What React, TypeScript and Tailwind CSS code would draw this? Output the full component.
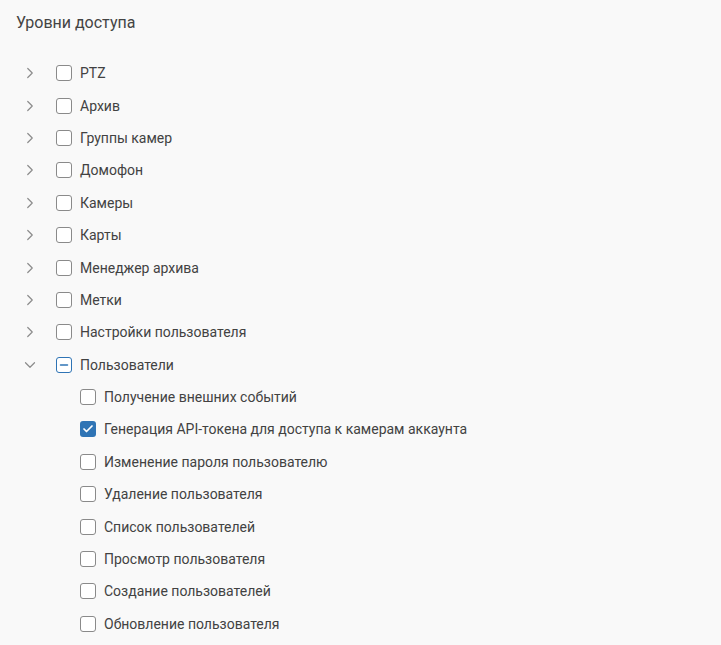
import { Check, ChevronRight, ChevronDown, Minus } from 'lucide-react';

type Node = { label: string; open?: boolean; children?: { label: string; checked?: boolean }[] };

const groups: Node[] = [
  { label: 'PTZ' },
  { label: 'Архив' },
  { label: 'Группы камер' },
  { label: 'Домофон' },
  { label: 'Камеры' },
  { label: 'Карты' },
  { label: 'Менеджер архива' },
  { label: 'Метки' },
  { label: 'Настройки пользователя' },
  {
    label: 'Пользователи',
    open: true,
    children: [
      { label: 'Получение внешних событий' },
      { label: 'Генерация API-токена для доступа к камерам аккаунта', checked: true },
      { label: 'Изменение пароля пользователю' },
      { label: 'Удаление пользователя' },
      { label: 'Список пользователей' },
      { label: 'Просмотр пользователя' },
      { label: 'Создание пользователей' },
      { label: 'Обновление пользователя' },
    ],
  },
];

function Box({ state }: { state?: 'checked' | 'partial' }) {
  if (state === 'checked') {
    return (
      <span className="w-4 h-4 rounded-[3px] bg-[#2f74b5] flex items-center justify-center">
        <Check className="w-3 h-3 text-white" strokeWidth={3.5} />
      </span>
    );
  }
  if (state === 'partial') {
    return (
      <span className="w-4 h-4 rounded-[3px] border-[1.5px] border-[#2f74b5] bg-white flex items-center justify-center">
        <Minus className="w-3 h-3 text-[#2f74b5]" strokeWidth={3} />
      </span>
    );
  }
  return <span className="w-4 h-4 rounded-[3px] border border-[#8a8a8a] bg-white" />;
}

export default function App() {
  return (
    <div
      className="min-h-screen bg-[#f9f9f9] text-[#424242] pl-4 pt-3"
      style={{ fontFamily: 'Roboto, "Liberation Sans", sans-serif' }}
    >
      <h1 className="text-base leading-[22px] text-[#444]">Уровни доступа</h1>
      <ul className="mt-[23px]">
        {groups.map((g) => (
          <li key={g.label}>
            <div className="h-[32.4px] flex items-center">
              <span className="w-10 pl-[5px] flex items-center text-[#8c8c8c]">
                {g.open ? (
                  <ChevronDown className="w-[18px] h-[18px]" strokeWidth={1.6} />
                ) : (
                  <ChevronRight className="w-[18px] h-[18px]" strokeWidth={1.6} />
                )}
              </span>
              <Box state={g.open ? 'partial' : undefined} />
              <span className="ml-2 text-sm">{g.label}</span>
            </div>
            {g.children && (
              <ul className="pl-16">
                {g.children.map((c) => (
                  <li key={c.label} className="h-[32.4px] flex items-center">
                    <Box state={c.checked ? 'checked' : undefined} />
                    <span className="ml-2 text-sm">{c.label}</span>
                  </li>
                ))}
              </ul>
            )}
          </li>
        ))}
      </ul>
    </div>
  );
}
